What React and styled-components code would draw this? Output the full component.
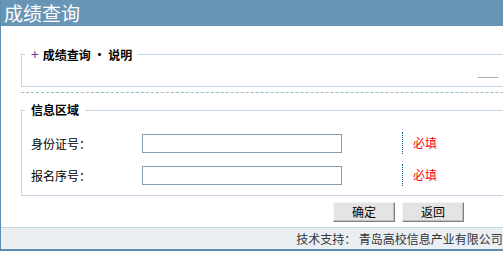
import React from 'react';
import styled, { createGlobalStyle } from 'styled-components';

const GlobalStyle = createGlobalStyle`
  html, body {
    margin: 0;
    padding: 0;
    background: #fff;
    overflow: hidden;
  }
  body {
    font-family: "Noto Sans CJK SC", "Liberation Sans", sans-serif;
    font-size: 12px;
    color: #000;
  }
`;

const Page = styled.div`
  width: 797px;
  border-left: 1px solid #5d8cb0;
  border-bottom: 2px solid #5d8cb0;
`;

const Header = styled.div`
  height: 26px;
  background: #6795b5;
  color: #fff;
  font-size: 19px;
  line-height: 26px;
  padding-left: 3px;
`;

const Body = styled.div`
  padding: 21px 20px 0 20px;
`;

const Box = styled.fieldset`
  margin: 0;
  padding: 0 0 ${p => p.$bottom || 0}px 3px;
  border: 1px solid #c6d6e4;
  min-width: 0;
`;

const Legend = styled.legend`
  padding: 0 6px;
  font-weight: bold;
  font-size: 12px;
  line-height: 14px;
  height: 14px;
`;

const Plus = styled.span`
  color: #6a3a96;
  font-weight: normal;
  font-size: 14px;
  margin-right: 4px;
`;

const NoteArea = styled.div`
  height: 25px;
  padding-left: 452px;
  box-sizing: border-box;
  padding-top: 9px;
  line-height: 12px;
  color: #999;
  font-size: 13px;
`;

const Dashed = styled.div`
  margin-top: 5px;
  margin-bottom: 10px;
  border-top: 1px dashed #9ab8cc;
`;

const Rows = styled.div`
  padding: 10px 0 0 6px;
`;

const Row = styled.div`
  display: grid;
  grid-template-columns: 111px 260px 1fr;
  align-items: center;
  height: 32px;
`;

const Label = styled.span`
  font-size: 12px;
`;

const Input = styled.input`
  width: 200px;
  height: 19px;
  box-sizing: border-box;
  border: 1px solid #7f9db9;
  padding: 0 2px;
  margin: 0;
  font-size: 12px;
  outline: none;
`;

const Required = styled.div`
  height: 22px;
  border-left: 1px dotted #1a5a80;
  padding-left: 10px;
  color: #ff0000;
  line-height: 22px;
  font-size: 12px;
`;

const Buttons = styled.div`
  display: flex;
  justify-content: center;
  gap: 7px;
  margin-top: 6px;
  margin-left: -22px;
  margin-right: -20px;
`;

const Button = styled.button`
  width: 62px;
  height: 20px;
  padding: 0;
  margin: 0;
  background: #e4e4e4;
  border: 1px solid;
  border-color: #f4f4f4 #808080 #808080 #f4f4f4;
  box-shadow: inset -1px -1px 0 #c0c0c0;
  font-family: "Noto Sans CJK SC", sans-serif;
  font-size: 12px;
  line-height: 18px;
  color: #000;
`;

const Footer = styled.div`
  margin-top: 5px;
  height: 22px;
  box-sizing: border-box;
  border-top: 1px solid #c5d8e6;
  background: #e9eff3;
  color: #333;
  text-align: center;
  line-height: 21px;
  font-size: 12px;
`;

export default function App() {
  return (
    <>
      <GlobalStyle />
      <Page>
        <Header>成绩查询</Header>
        <Body>
          <Box>
            <Legend><Plus>+</Plus>成绩查询 • 说明</Legend>
            <NoteArea>——</NoteArea>
          </Box>
          <Dashed />
          <Box $bottom={4}>
            <Legend>信息区域</Legend>
            <Rows>
              <Row>
                <Label>身份证号：</Label>
                <div><Input type="text" /></div>
                <Required>必填</Required>
              </Row>
              <Row>
                <Label>报名序号：</Label>
                <div><Input type="text" /></div>
                <Required>必填</Required>
              </Row>
            </Rows>
          </Box>
          <Buttons>
            <Button>确定</Button>
            <Button>返回</Button>
          </Buttons>
        </Body>
        <Footer>技术支持：&nbsp;青岛高校信息产业有限公司</Footer>
      </Page>
    </>
  );
}
